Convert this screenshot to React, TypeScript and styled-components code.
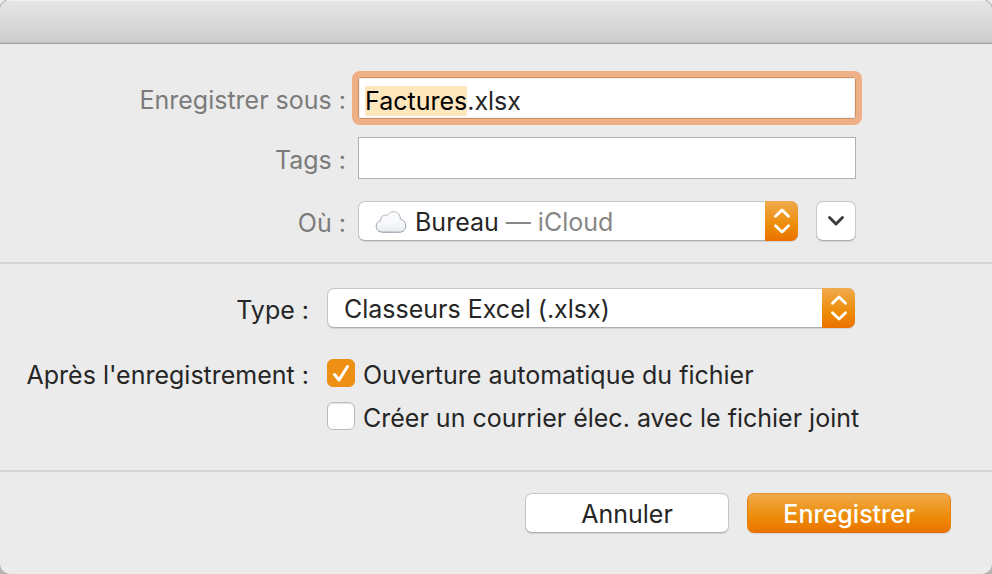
import React, { useEffect, useRef, useState } from "react";
import styled, { createGlobalStyle, css } from "styled-components";

const GlobalStyle = createGlobalStyle`
  *, *::before, *::after { box-sizing: border-box; }
  body {
    margin: 0;
    background: linear-gradient(#efefef, #b4b4b4);
    font-family: Inter, "Liberation Sans", sans-serif;
    font-size: 25px;
    line-height: 34px;
    color: #262626;
  }
  button, input, select { font: inherit; color: inherit; }
`;

const orange = "linear-gradient(#f0ab4e, #ed8c07 60%, #eb7100)";

const Dialog = styled.form`
  display: flex;
  flex-direction: column;
  min-height: 100vh;
  overflow: hidden;
  background: #ebebeb;
  border-radius: 10px;
  box-shadow: 0 0 0 1px #b0b0b0;
`;

const TitleBar = styled.header`
  height: 44px;
  background: linear-gradient(#e6e6e6, #cdcdcd);
  border-bottom: 1px solid #a3a3a3;
  box-shadow: inset 0 1px #f3f3f3, inset 0 -1px #bebebe;
`;

const Section = styled.section<{ $label: number; $gap: number }>`
  display: grid;
  grid-template-columns: ${(p) => p.$label}px minmax(0, 1fr);
  column-gap: ${(p) => p.$gap}px;
  align-items: center;
  padding-right: 136px;
`;

const FileSection = styled(Section)`
  padding-top: 33px;
  padding-bottom: 17px;
  grid-template-rows: 42px 42px 48px;
  row-gap: 18px;
`;

const TypeSection = styled(Section)`
  padding-top: 24px;
  padding-right: 137px;
  padding-bottom: 35px;
  row-gap: 30px;
  border-top: 2px solid #d4d4d4;
`;

const Label = styled.label<{ $dim?: boolean }>`
  justify-self: end;
  white-space: nowrap;
  padding-top: 4px;
  color: ${(p) => (p.$dim ? "#7b7b7b" : "#262626")};
`;

const GroupLabel = styled.span`
  align-self: start;
  justify-self: end;
  white-space: nowrap;
`;

const TextField = styled.input`
  width: 100%;
  height: 42px;
  padding: 6px 6px 0;
  border: 1px solid #b1b1b1;
  border-radius: 0;
  background: #fff;
  outline: none;
  &:focus {
    border-color: #cf9067;
    outline: 6px solid #efb087;
    box-shadow: inset 0 0 0 1px #eef3f3;
    border-radius: 2px;
  }
  &::selection { background: #ffe7bd; color: #000; }
`;

const Row = styled.div`
  display: flex;
  gap: 18px;
`;

const raised = css`
  background: #fff;
  border: 1px solid #c6c6c6;
  border-bottom-color: #adadad;
  border-radius: 7px;
  box-shadow: 0 1px 1px rgba(0, 0, 0, 0.1);
`;

const PopUp = styled.div`
  ${raised}
  display: grid;
  grid-template-columns: minmax(0, 1fr) 33px;
  flex: 1;
  height: 40px;
`;

const Face = styled.span<{ $inset: number }>`
  grid-area: 1 / 1;
  display: flex;
  align-items: center;
  height: 40px;
  padding-left: ${(p) => p.$inset}px;
  white-space: pre;
`;

const Native = styled.select`
  grid-area: 1 / 1 / 2 / 3;
  z-index: 1;
  width: 100%;
  height: 38px;
  opacity: 0;
`;

const Stepper = styled.span`
  grid-area: 1 / 2;
  display: grid;
  place-items: center;
  height: 40px;
  margin: -1px -1px -1px 1px;
  background: ${orange};
  border-radius: 0 7px 7px 0;
`;

const Place = styled.span`
  color: #868686;
`;

const CloudArt = styled.svg`
  margin-right: 8px;
`;

const Expand = styled.button`
  ${raised}
  display: grid;
  place-items: center;
  width: 40px;
  height: 40px;
  padding: 0;
`;

const Checks = styled.div`
  display: grid;
  row-gap: 9px;
`;

const Check = styled.label`
  display: flex;
  gap: 8px;
  white-space: nowrap;
`;

const Box = styled.span`
  display: grid;
  flex: none;
  width: 28px;
  height: 28px;
  margin-top: 1px;
`;

const Tick = styled.input`
  grid-area: 1 / 1;
  appearance: none;
  width: 28px;
  height: 28px;
  margin: 0;
  background: #fff;
  border: 1px solid #bcbcbc;
  border-radius: 6px;
  box-shadow: inset 0 1px 1px rgba(0, 0, 0, 0.12);
  &:checked { background: #ee9013; border-color: #e98e18; box-shadow: none; }
  & + svg { grid-area: 1 / 1; visibility: hidden; pointer-events: none; }
  &:checked + svg { visibility: visible; }
`;

const Actions = styled.footer`
  display: flex;
  justify-content: flex-end;
  gap: 18px;
  padding: 21px 41px;
  border-top: 2px solid #d4d4d4;
`;

const Action = styled.button<{ $primary?: boolean }>`
  ${raised}
  width: 204px;
  height: 40px;
  padding: 1px 0 0;
  ${(p) =>
    p.$primary &&
    css`
      background: ${orange} border-box;
      border-color: #e2932f #e88310 #e07008;
      color: #fff;
      font-weight: 500;
    `}
`;

const Arrows = () => (
  <svg width="16" height="26" viewBox="0 0 16 26" fill="none" stroke="#fff" strokeWidth="2.800" strokeLinecap="round" strokeLinejoin="round" aria-hidden="true">
    <path d="M1.500 8.300 8 2l6.500 6.300M1.500 17.700 8 24l6.500-6.300" />
  </svg>
);

const Cloud = () => (
  <CloudArt width="32" height="24" viewBox="0 0 32 24" aria-hidden="true">
    <defs>
      <linearGradient id="cloud" x1="0" y1="0" x2="0" y2="1">
        <stop offset="0" stopColor="#fdfdfe" />
        <stop offset="0.6" stopColor="#f7f8fa" />
        <stop offset="1" stopColor="#e4e8ee" />
      </linearGradient>
      <linearGradient id="cloudEdge" x1="0" y1="0" x2="0" y2="1">
        <stop offset="0" stopColor="#b3b8c2" />
        <stop offset="1" stopColor="#8b94a3" />
      </linearGradient>
    </defs>
    <path
      d="M7.500 22.200C3.900 22.200 1.200 19.700 1.200 16.300c0-2.900 1.900-4.900 4.400-5.600C5.500 7.300 7.700 5 10.300 5c.9 0 1.600.2 2.200.6C13.600 3.200 15.700 1.700 18.400 1.700c4.100 0 7.100 3.200 7 7.600 3.200.5 5.400 3 5.400 6.400 0 3.700-2.700 6.500-6.200 6.500z"
      fill="url(#cloud)"
      stroke="url(#cloudEdge)"
      strokeWidth="1"
    />
    <path d="M12.500 5.600c1.200.6 2 1.600 2.300 3M25.400 9.300c-.2 2.800-2.400 4.900-5 5.200" fill="none" stroke="#eceff3" strokeWidth="1" />
  </CloudArt>
);

const types = ["Classeurs Excel (.xlsx)"];

export default function App() {
  const nameRef = useRef<HTMLInputElement>(null);
  const [type, setType] = useState(types[0]);

  useEffect(() => {
    const field = nameRef.current;
    if (!field) return;
    field.focus();
    field.setSelectionRange(0, field.value.lastIndexOf("."));
  }, []);

  return (
    <>
      <GlobalStyle />
      <Dialog onSubmit={(e) => e.preventDefault()}>
        <TitleBar />
        <FileSection $label={346} $gap={12}>
          <Label $dim htmlFor="name">Enregistrer sous :</Label>
          <TextField id="name" ref={nameRef} defaultValue="Factures.xlsx" spellCheck={false} />
          <Label $dim htmlFor="tags">Tags :</Label>
          <TextField id="tags" />
          <Label $dim htmlFor="where">Où :</Label>
          <Row>
            <PopUp>
              <Face $inset={16} aria-hidden="true">
                <Cloud />
                Bureau <Place>— iCloud</Place>
              </Face>
              <Stepper><Arrows /></Stepper>
              <Native id="where">
                <option>Bureau — iCloud</option>
              </Native>
            </PopUp>
            <Expand type="button" aria-label="Développer">
              <svg width="18" height="12" viewBox="0 0 18 12" fill="none" stroke="#3c3c3c" strokeWidth="3" strokeLinecap="round" strokeLinejoin="round" aria-hidden="true">
                <path d="M2.500 2.500 9 9l6.500-6.500" />
              </svg>
            </Expand>
          </Row>
        </FileSection>
        <TypeSection $label={309} $gap={18}>
          <Label htmlFor="type">Type :</Label>
          <PopUp>
            <Face $inset={16} aria-hidden="true">{type}</Face>
            <Stepper><Arrows /></Stepper>
            <Native id="type" value={type} onChange={(e) => setType(e.target.value)}>
              {types.map((t) => <option key={t}>{t}</option>)}
            </Native>
          </PopUp>
          <GroupLabel id="after">Après l'enregistrement :</GroupLabel>
          <Checks role="group" aria-labelledby="after">
            {[
              { text: "Ouverture automatique du fichier", on: true },
              { text: "Créer un courrier élec. avec le fichier joint", on: false },
            ].map((c) => (
              <Check key={c.text}>
                <Box>
                  <Tick type="checkbox" defaultChecked={c.on} />
                  <svg viewBox="0 0 28 28" fill="none" stroke="#fff" strokeWidth="3" strokeLinecap="round" strokeLinejoin="round" aria-hidden="true">
                    <path d="M7.500 15.500l4.500 5.500L20.500 7.500" />
                  </svg>
                </Box>
                {c.text}
              </Check>
            ))}
          </Checks>
        </TypeSection>
        <Actions>
          <Action type="button">Annuler</Action>
          <Action $primary type="submit">Enregistrer</Action>
        </Actions>
      </Dialog>
    </>
  );
}
